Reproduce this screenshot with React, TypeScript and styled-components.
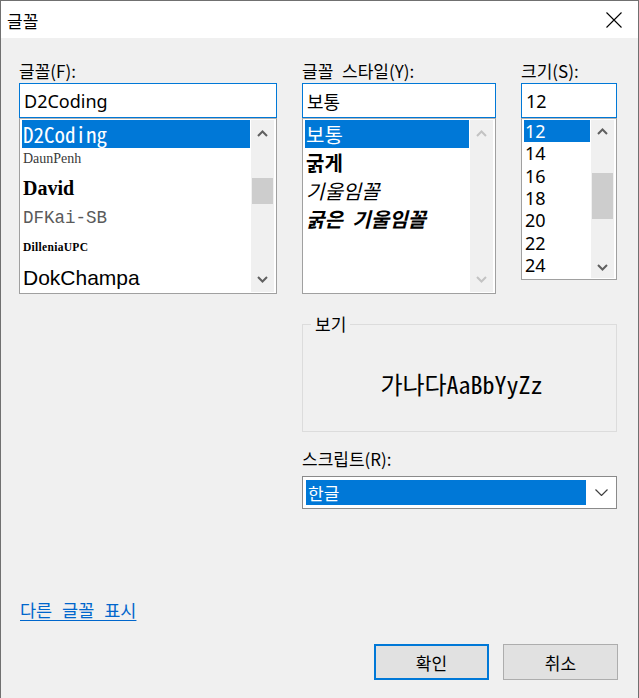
import React from "react";
import styled, { createGlobalStyle } from "styled-components";

const KR = `"Noto Sans CJK KR", "Noto Sans", sans-serif`;
const LATIN = `"Noto Sans", "Noto Sans CJK KR", sans-serif`;
const MONO = `"Noto Sans Mono CJK KR", "DejaVu Sans Mono", "Noto Sans CJK KR", monospace`;

const GlobalStyle = createGlobalStyle`
  html, body { margin: 0; padding: 0; background: #f0f0f0; }
  body { font-family: ${KR}; color: #000; word-spacing: 5px; }
  * { box-sizing: border-box; }
`;

const Window = styled.div`
  width: 639px;
  height: 698px;
  display: flex;
  flex-direction: column;
  border: 1px solid #707070;
  border-bottom: none;
  background: #f0f0f0;
  overflow: hidden;
`;

const TitleBar = styled.div`
  height: 37px;
  flex: none;
  background: #fff;
  display: flex;
  align-items: center;
  justify-content: space-between;
  padding-left: 6px;
`;

const Title = styled.span`
  font-size: 17px;
  line-height: 1;
  margin-top: 1px;
`;

const CloseButton = styled.div`
  width: 48px;
  height: 37px;
  display: flex;
  align-items: center;
  justify-content: center;
`;

const Body = styled.div`
  flex: 1;
  display: flex;
  flex-direction: column;
  padding: 21px 20px 18px 18px;
`;

const TopGrid = styled.div`
  display: grid;
  grid-template-columns: 258px 194px 96px;
  column-gap: 25px;
  align-items: start;
`;

const Column = styled.div`
  display: flex;
  flex-direction: column;
`;

const Label = styled.div`
  font-size: 17px;
  line-height: 24px;
  height: 24px;
  white-space: nowrap;
`;

const TextBox = styled.div<{ $latin?: boolean }>`
  height: 35px;
  border: 1px solid #0078d7;
  background: #fff;
  display: flex;
  align-items: center;
  padding: 0 5px 0 4px;
  font-family: ${(p) => (p.$latin ? LATIN : KR)};
  font-size: 18px;
`;

const ListBox = styled.div<{ $height: number }>`
  height: ${(p) => p.$height}px;
  border: 1px solid #a0a0a0;
  border-top-color: #b4b4b4;
  background: #fff;
  display: flex;
  padding: 1px 2px 1px 2px;
`;

const Items = styled.div`
  flex: 1;
  min-width: 0;
  display: flex;
  flex-direction: column;
  overflow: hidden;
`;

const Item = styled.div<{
  $h: number;
  $selected?: boolean;
  $font?: string;
  $size?: number;
  $weight?: number;
  $italic?: boolean;
  $color?: string;
  $spacing?: number;
}>`
  height: ${(p) => p.$h}px;
  flex: none;
  display: flex;
  align-items: center;
  padding-left: 1px;
  white-space: nowrap;
  background: ${(p) => (p.$selected ? "#0078d7" : "transparent")};
  color: ${(p) => (p.$selected ? "#fff" : p.$color || "#000")};
  font-family: ${(p) => p.$font || KR};
  font-size: ${(p) => p.$size || 18}px;
  font-weight: ${(p) => p.$weight || 400};
  font-style: ${(p) => (p.$italic ? "italic" : "normal")};
  letter-spacing: ${(p) => p.$spacing || 0}px;
`;

const Scrollbar = styled.div`
  width: 23px;
  flex: none;
  margin-left: 1px;
  background: #f0f0f0;
  display: flex;
  flex-direction: column;
`;

const ScrollArrow = styled.div<{ $h: number }>`
  height: ${(p) => p.$h}px;
  flex: none;
  display: flex;
  align-items: center;
  justify-content: center;
`;

const Track = styled.div`
  flex: 1;
  display: flex;
  flex-direction: column;
`;

const Thumb = styled.div<{ $h: number }>`
  height: ${(p) => p.$h}px;
  margin: 0 1px;
  background: #cdcdcd;
`;

const MiddleGrid = styled.div`
  display: grid;
  grid-template-columns: 258px 194px 96px;
  column-gap: 25px;
`;

const RightPane = styled.div`
  grid-column: 2 / 4;
  display: flex;
  flex-direction: column;
`;

const PreviewGroup = styled.fieldset`
  margin: 18px 0 0 0;
  padding: 0;
  min-width: 0;
  height: 120px;
  border: 1px solid #dcdcdc;
`;

const PreviewLegend = styled.legend`
  margin-left: 8px;
  padding: 0 4px;
  font-size: 17px;
  line-height: 24px;
`;

const PreviewArea = styled.div`
  height: 95px;
  display: flex;
  align-items: center;
  justify-content: center;
  padding-top: 0;
  padding-left: 4px;
  font-family: ${MONO};
  font-size: 24px;
  color: #000;
`;

const ScriptLabel = styled(Label)`
  margin-top: 15px;
`;

const ComboBox = styled.div`
  margin-top: 5px;
  height: 33px;
  border: 1px solid #8a8a8a;
  background: #fff;
  display: flex;
  padding: 3px;
`;

const ComboValue = styled.div`
  flex: 1;
  background: #0078d7;
  color: #fff;
  font-size: 17px;
  display: flex;
  align-items: center;
  padding-left: 2px;
`;

const ComboArrow = styled.div`
  width: 27px;
  flex: none;
  display: flex;
  align-items: center;
  justify-content: center;
  padding-left: 3px;
`;

const MoreLink = styled.a`
  margin-top: auto;
  align-self: flex-start;
  margin-left: 1px;
  font-size: 17.5px;
  line-height: 24px;
  word-spacing: 6px;
  color: #0066cc;
  text-decoration: underline;
  text-underline-offset: 3px;
  cursor: pointer;
`;

const ButtonRow = styled.div`
  margin-top: 22px;
  display: flex;
  justify-content: flex-end;
  gap: 14px;
`;

const Button = styled.div<{ $default?: boolean }>`
  width: 115px;
  height: 36px;
  display: flex;
  align-items: center;
  justify-content: center;
  background: #e1e1e1;
  border: ${(p) => (p.$default ? "2px solid #0078d7" : "1px solid #adadad")};
  font-size: 17px;
`;

const Chevron = ({ up, disabled }: { up?: boolean; disabled?: boolean }) => (
  <svg width="11" height="7" viewBox="0 0 11 7">
    <polyline
      points={up ? "1,6 5.5,1.5 10,6" : "1,1 5.5,5.5 10,1"}
      fill="none"
      stroke={disabled ? "#c3c3c3" : "#606060"}
      strokeWidth="2"
    />
  </svg>
);

const ScrollBarView = ({
  arrowH,
  thumbTop,
  thumbH,
  disabled,
}: {
  arrowH: number;
  thumbTop?: number;
  thumbH?: number;
  disabled?: boolean;
}) => (
  <Scrollbar>
    <ScrollArrow $h={arrowH}>
      <Chevron up disabled={disabled} />
    </ScrollArrow>
    <Track>
      {thumbH ? <Thumb $h={thumbH} style={{ marginTop: thumbTop }} /> : null}
    </Track>
    <ScrollArrow $h={arrowH}>
      <Chevron disabled={disabled} />
    </ScrollArrow>
  </Scrollbar>
);

const fonts = [
  { name: "D2Coding", h: 28, font: MONO, size: 21, selected: true },
  { name: "DaunPenh", h: 22, font: `"Liberation Serif", serif`, size: 14, color: "#3a3a3a" },
  { name: "David", h: 36, font: `"Liberation Serif", serif`, size: 20, weight: 700 },
  { name: "DFKai-SB", h: 24, font: `"Liberation Mono", monospace`, size: 17.5, color: "#5a5a5a" },
  { name: "DilleniaUPC", h: 34, font: `"Liberation Serif", serif`, size: 11.5, weight: 700, spacing: 0.3 },
  { name: "DokChampa", h: 28, font: `"Liberation Sans", sans-serif`, size: 21 },
];

const styles = [
  { name: "보통", selected: true },
  { name: "굵게", weight: 700 },
  { name: "기울임꼴", italic: true },
  { name: "굵은 기울임꼴", weight: 700, italic: true },
];

const sizes = ["12", "14", "16", "18", "20", "22", "24"];

export default function App() {
  return (
    <>
      <GlobalStyle />
      <Window>
        <TitleBar>
          <Title>글꼴</Title>
          <CloseButton>
            <svg width="16" height="16" viewBox="0 0 16 16">
              <path d="M0.5 0.5 L15.5 15.5 M15.5 0.5 L0.5 15.5" stroke="#000" strokeWidth="1.1" />
            </svg>
          </CloseButton>
        </TitleBar>
        <Body>
          <TopGrid>
            <Column>
              <Label>글꼴(F):</Label>
              <TextBox $latin>D2Coding</TextBox>
              <ListBox $height={176}>
                <Items>
                  {fonts.map((f) => (
                    <Item
                      key={f.name}
                      $h={f.h}
                      $selected={f.selected}
                      $font={f.font}
                      $size={f.size}
                      $weight={f.weight}
                      $color={f.color}
                      $spacing={f.spacing}
                    >
                      {f.name}
                    </Item>
                  ))}
                </Items>
                <ScrollBarView arrowH={26} thumbTop={32} thumbH={26} />
              </ListBox>
            </Column>
            <Column>
              <Label>글꼴 스타일(Y):</Label>
              <TextBox>보통</TextBox>
              <ListBox $height={176}>
                <Items>
                  {styles.map((s) => (
                    <Item
                      key={s.name}
                      $h={28}
                      $selected={s.selected}
                      $size={20}
                      $weight={s.weight}
                      $italic={s.italic}
                    >
                      {s.name}
                    </Item>
                  ))}
                </Items>
                <ScrollBarView arrowH={26} disabled />
              </ListBox>
            </Column>
            <Column>
              <Label>크기(S):</Label>
              <TextBox $latin>12</TextBox>
              <ListBox $height={162}>
                <Items>
                  {sizes.map((s, i) => (
                    <Item key={s} $h={22.3} $selected={i === 0} $font={LATIN} $size={18}>
                      {s}
                    </Item>
                  ))}
                </Items>
                <ScrollBarView arrowH={22} thumbTop={31} thumbH={46} />
              </ListBox>
            </Column>
          </TopGrid>
          <MiddleGrid>
            <RightPane>
              <PreviewGroup>
                <PreviewLegend>보기</PreviewLegend>
                <PreviewArea>가나다AaBbYyZz</PreviewArea>
              </PreviewGroup>
              <ScriptLabel>스크립트(R):</ScriptLabel>
              <ComboBox>
                <ComboValue>한글</ComboValue>
                <ComboArrow>
                  <svg width="13" height="7" viewBox="0 0 13 7">
                    <polyline points="0.5,0.5 6.5,6.5 12.5,0.5" fill="none" stroke="#404040" strokeWidth="1.2" />
                  </svg>
                </ComboArrow>
              </ComboBox>
            </RightPane>
          </MiddleGrid>
          <MoreLink>다른 글꼴 표시</MoreLink>
          <ButtonRow>
            <Button $default>확인</Button>
            <Button>취소</Button>
          </ButtonRow>
        </Body>
      </Window>
    </>
  );
}
